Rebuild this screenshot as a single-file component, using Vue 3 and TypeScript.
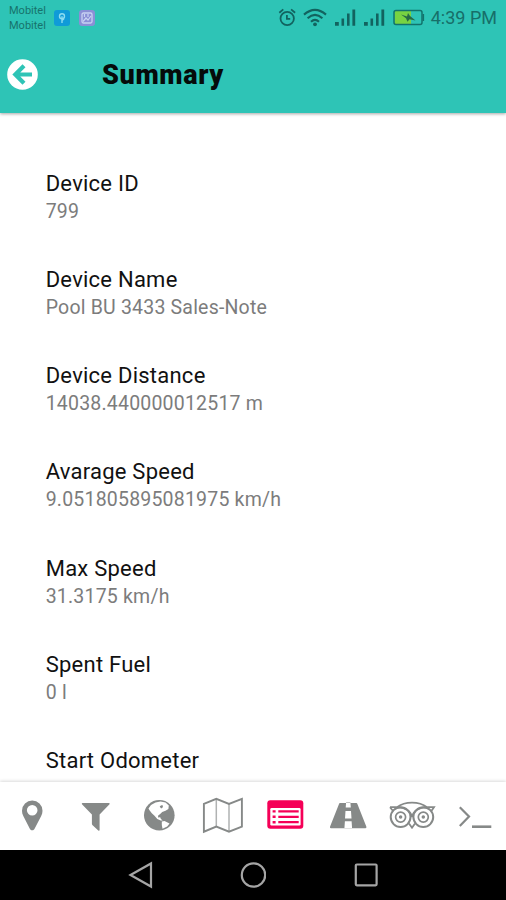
<script setup lang="ts">
interface SummaryItem {
  title: string
  value: string
}

const items: SummaryItem[] = [
  { title: 'Device ID', value: '799' },
  { title: 'Device Name', value: 'Pool BU 3433 Sales-Note' },
  { title: 'Device Distance', value: '14038.440000012517 m' },
  { title: 'Avarage Speed', value: '9.051805895081975 km/h' },
  { title: 'Max Speed', value: '31.3175 km/h' },
  { title: 'Spent Fuel', value: '0 l' },
  { title: 'Start Odometer', value: '' },
]
</script>

<template>
  <div class="screen">
    <header class="header">
      <div class="status">
        <div class="carriers"><span>Mobitel</span><span>Mobitel</span></div>
        <svg class="app-icon" width="16" height="16" viewBox="0 0 16 16">
          <rect width="16" height="16" rx="3" fill="#0f9bd8" />
          <circle cx="8" cy="6.300" r="2.500" fill="none" stroke="#8bdcf0" stroke-width="1.400" />
          <path d="M8 6.300V13M8 10.500l2-1.800" fill="none" stroke="#8bdcf0" stroke-width="1.400" />
        </svg>
        <svg class="app-icon second" width="16" height="16" viewBox="0 0 16 16">
          <rect width="16" height="16" rx="3" fill="#8b8fd6" />
          <rect x="3" y="3" width="10" height="10" rx="1.500" fill="none" stroke="#c9d3f3" stroke-width="1.300" />
          <path d="M4 11.500 7 8l2 2 3-4M5.500 4v3M9 4v3" fill="none" stroke="#c9d3f3" stroke-width="1.200" />
        </svg>
        <div class="indicators">
          <svg width="18" height="36" viewBox="0 0 18 36" fill="none" stroke="#12635f" stroke-width="1.800">
            <circle cx="9.200" cy="18.500" r="6.700" />
            <path d="M8.900 15v3.800h3.300M1.300 12.700l4-3.300M17.100 12.700l-4-3.300" />
          </svg>
          <svg class="wifi" width="24" height="36" viewBox="0 0 24 36" fill="none" stroke="#12635f" stroke-width="2.100">
            <path d="M1 14.600Q12 5 23 14.600M4.600 18.200Q12 11.600 19.400 18.200M8 21.700Q12 18 16 21.700" />
            <circle cx="12" cy="24.300" r="1.900" fill="#12635f" stroke="none" />
          </svg>
          <svg v-for="n in 2" :key="n" class="signal" width="21" height="36" viewBox="0 0 21 36" fill="#12635f">
            <path d="M0 22h3.800v3.700H0zM6.500 18.500h2.600v7.200H6.500zM12 13.500h2.600v12.200H12zM17.400 9.500h2.800v16.200h-2.800z" />
          </svg>
          <svg class="battery" width="32" height="36" viewBox="0 0 32 36">
            <rect x="1.500" y="11" width="16.500" height="13" fill="#78d342" />
            <rect x="1" y="10.400" width="28" height="14.200" rx="2" fill="none" stroke="#12736c" stroke-width="1.500" />
            <path d="M30.300 14v7" stroke="#12736c" stroke-width="1.600" />
            <path d="m8 14.500 6 2 1-3.500 2 3 5.500 4.500-6-1.200-2 2.500-1.500-3.500z" fill="#276b45" />
          </svg>
          <span class="clock">4:39 PM</span>
        </div>
      </div>
      <div class="title-bar">
        <svg class="back" width="31" height="31" viewBox="0 0 31 31">
          <circle cx="15.500" cy="15.500" r="15.300" fill="#fff" />
          <path d="M17 6.800 8.300 15.500l8.700 8.700M8.500 15.500H25" fill="none" stroke="#2ec4b6" stroke-width="4.200" />
        </svg>
        <h1>Summary</h1>
      </div>
    </header>

    <main class="content">
      <section v-for="item in items" :key="item.title" class="item">
        <div class="item-title">{{ item.title }}</div>
        <div class="item-value">{{ item.value }}</div>
      </section>
    </main>

    <nav class="tabs">
      <svg viewBox="0 0 63.250 68">
        <path fill-rule="evenodd" d="M32.200 48.300c-1.300 0-2-.7-2.500-1.800L23.300 34c-.9-1.800-1.300-3.500-1.300-5.300a10.250 10.250 0 0 1 20.500 0c0 1.800-.4 3.500-1.300 5.300l-6.500 12.500c-.5 1.100-1.200 1.800-2.500 1.800zM32.200 23a5.300 5.300 0 1 0 0 10.600 5.300 5.300 0 0 0 0-10.600z" />
      </svg>
      <svg viewBox="0 0 63.250 68">
        <path d="M19.500 21H46c.8 0 .9 1 .3 1.600L36.600 32.500V48c0 .7-.7.900-1.300.4l-5.700-5.100c-.5-.4-.7-.8-.7-1.500v-9.300l-9.700-9.900c-.6-.6-.5-1.600.3-1.600z" />
      </svg>
      <svg viewBox="0 0 63.250 68">
        <circle cx="32.300" cy="33.300" r="15.300" />
        <path fill="#fff" d="m21.500 26.500 2.500-3.500 4.500-2.600 5-.9 5 1 3.300 3-.4 3.600-2.900 1.600-3.300 1.200-2 2.200-2 1.500-.2 2 2.200-.4.700 1.800 1.800 1.600-2-.1-3.400-1.500-2.800-3.300-2.700-2.400-2.300-3z" />
        <path d="m32.700 24.600 1.600-1.400 1.700.3-.3 1.900-1.600 1z" />
        <path fill="#fff" d="m34.800 39.400 2.700-.4 5 2.500-2.300 3-4.700 2.200-.7-3.800z" />
      </svg>
      <svg viewBox="0 0 63.250 68" class="outline">
        <path stroke-width="1.500" opacity=".65" d="M26.300 17v27.500M39 22v27.500" />
        <path d="m13.900 21.800 12.400-5L39 22l12.900-5.200v27.900L39 49.700l-12.700-5.200-12.400 5.200z" />
      </svg>
      <svg viewBox="0 0 63.250 68" class="active">
        <rect x="14.300" y="18.300" width="36" height="28.400" rx="3" />
        <rect x="17.300" y="26" width="30.300" height="17.600" rx="1.300" fill="#fff" />
        <path d="M25.300 28.300h20.400v2.200H25.300zM25.300 33.700h20.400v2.200H25.300zM25.300 39.100h20.400v2.200H25.300zM19.600 28.200h3v2.400h-3zM19.600 33.600h3V36h-3zM19.600 39h3v2.400h-3z" />
      </svg>
      <svg viewBox="0 0 63.250 68">
        <path fill-rule="evenodd" d="M24.300 21H40c.8 0 1.100.3 1.400 1l8.900 22.500c.3.900 0 1.700-.8 1.700H14.900c-.8 0-1.100-.8-.8-1.700L23 22c.3-.7.6-1 1.300-1zM30.100 20.500l-.4 5h5.100l-.4-5zM29.500 29l-.5 7.500h6.500L35 29zM28.900 39.200l-.5 7.300h7.700l-.5-7.300z" />
      </svg>
      <svg viewBox="0 0 63.250 68" class="outline">
        <circle cx="20.600" cy="35.100" r="9.900" stroke-width="2" />
        <circle cx="43.300" cy="35.100" r="9.900" stroke-width="2" />
        <circle cx="20.600" cy="35.100" r="5" stroke-width="1.700" />
        <circle cx="43.300" cy="35.100" r="5" stroke-width="1.700" />
        <circle cx="20.600" cy="35.100" r=".8" />
        <circle cx="43.300" cy="35.100" r=".8" />
        <path d="M10 25.200h7c8-6 22-6 30 0h7l-2.800 4M10 25.200l3.300 4M16.500 25.500c8-.5 14.500 3.500 15.500 9.500 1-6 7.500-10 15.500-9.500M29 41.500l3 4.300 3-4.300" stroke-width="1.800" />
      </svg>
      <svg viewBox="0 0 63.250 68" class="outline">
        <path d="m16.800 25.300 9.200 9.300-9.200 9.300" stroke-width="2.200" />
        <path d="M29 44.700h19.300" stroke-width="2.600" />
      </svg>
    </nav>

    <footer class="system-nav">
      <svg width="26" height="28" viewBox="0 0 26 28"><path d="M2.500 14 23 2.500v23z" /></svg>
      <svg width="26" height="28" viewBox="0 0 26 28"><circle cx="13.500" cy="14" r="11.700" /></svg>
      <svg width="26" height="28" viewBox="0 0 26 28"><rect x="2.800" y="3.500" width="20.800" height="20.800" rx="1" /></svg>
    </footer>
  </div>
</template>

<style>
body {
  margin: 0;
  background: #fff;
}
</style>

<style scoped>
.screen {
  display: flex;
  flex-direction: column;
  width: 506px;
  height: 900px;
  overflow: hidden;
  background: #fff;
  font-family: Roboto, "Liberation Sans", sans-serif;
}
.header {
  flex: none;
  height: 113px;
  background: #2ec4b6;
  box-shadow: 0 1px 3px rgba(0, 0, 0, 0.35);
}
.status {
  display: flex;
  align-items: center;
  height: 36px;
  padding: 0 9px;
  box-sizing: border-box;
}
.carriers {
  display: flex;
  flex-direction: column;
  width: 45px;
  font-size: 11px;
  line-height: 15px;
  color: #17736c;
}
.second {
  margin-left: 9px;
}
.indicators {
  display: flex;
  align-items: center;
  margin-left: auto;
}
.wifi {
  margin-left: 7px;
}
.signal {
  margin-left: 8px;
}
.battery {
  margin-left: 8px;
}
.clock {
  margin-left: 6px;
  font-size: 18px;
  line-height: 36px;
  color: #176f69;
}
.title-bar {
  display: flex;
  align-items: center;
  height: 77px;
  padding-left: 7px;
}
.title-bar h1 {
  margin: 1px 0 0 64px;
  font-size: 27px;
  line-height: 37px;
  font-weight: 900;
  letter-spacing: 0.650px;
  color: #050b0a;
}
.content {
  flex: 1;
  min-height: 0;
  padding: 56.600px 45px 0 45.700px;
  overflow: hidden;
}
.item {
  height: 96.300px;
  line-height: 28px;
}
.item-title {
  font-size: 22px;
  letter-spacing: 0.240px;
  color: #111;
}
.item-value {
  font-size: 19.500px;
  letter-spacing: 0.200px;
  color: #7c7c7c;
}
.tabs {
  flex: none;
  display: grid;
  grid-template-columns: repeat(8, 1fr);
  height: 68px;
  background: #fff;
  box-shadow: 0 -1px 3px rgba(0, 0, 0, 0.15);
}
.tabs svg {
  width: 100%;
  height: 68px;
  fill: #868988;
}
.tabs .outline {
  fill: none;
  stroke: #868988;
  stroke-width: 1.900;
}
.tabs .active {
  fill: #f50057;
}
.system-nav {
  flex: none;
  display: flex;
  align-items: center;
  justify-content: center;
  gap: 86.500px;
  height: 50px;
  background: #000;
}
.system-nav svg {
  fill: none;
  stroke: #a5a5a5;
  stroke-width: 2.200;
}
</style>
